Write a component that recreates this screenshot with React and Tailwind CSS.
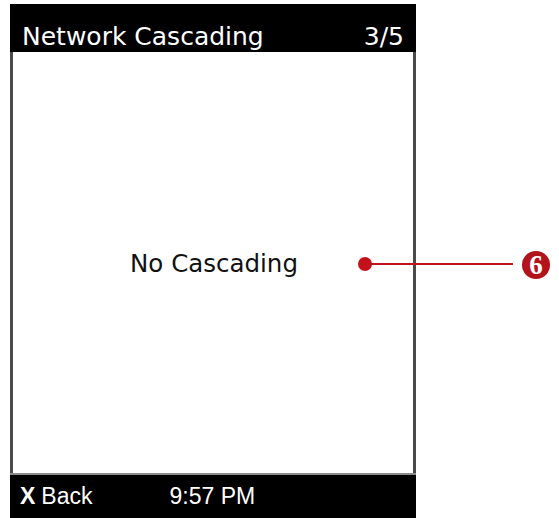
export default function App() {
  return (
    <div className="relative w-[559px] h-[518px] bg-white overflow-hidden">
      <div className="ml-[10px] pt-[4px] w-[406px] flex flex-col h-[518px]">
        <div className="h-[48px] bg-black flex items-end justify-between pl-[12px] pr-[12px] pb-[0px] text-white text-[25px] leading-[30px] font-['DejaVu_Sans',sans-serif]">
          <span>Network Cascading</span>
          <span>3/5</span>
        </div>
        <div className="h-[421px] bg-white border-l-[3px] border-r-[3px] border-[#4a4a4a] flex items-center justify-center">
          <span className="text-[24.5px] text-[#111] font-['DejaVu_Sans',sans-serif] pt-[3px] pl-[2px]">No Cascading</span>
        </div>
        <div className="flex-1 bg-black border-t-[2px] border-[#8a8a8a] flex items-center pl-[10px] pb-[1px] text-white text-[23px] font-['Liberation_Sans',Arial,sans-serif]">
          <span className="font-bold mr-[6px]">X</span>
          <span>Back</span>
          <span className="ml-[77px]">9:57 PM</span>
        </div>
      </div>
      <div className="absolute left-[358px] top-[257px] w-[14px] h-[14px] rounded-full bg-[#c4121c]" />
      <div className="absolute left-[370px] top-[263px] w-[143px] h-[2px] bg-[#c4121c]" />
      <div className="absolute left-[522px] top-[251px] w-[28px] h-[28px] rounded-full bg-[#b3131b] flex items-center justify-center text-white text-[27px] font-bold leading-none font-['Liberation_Serif',serif] pt-[1px]">6</div>
    </div>
  );
}
